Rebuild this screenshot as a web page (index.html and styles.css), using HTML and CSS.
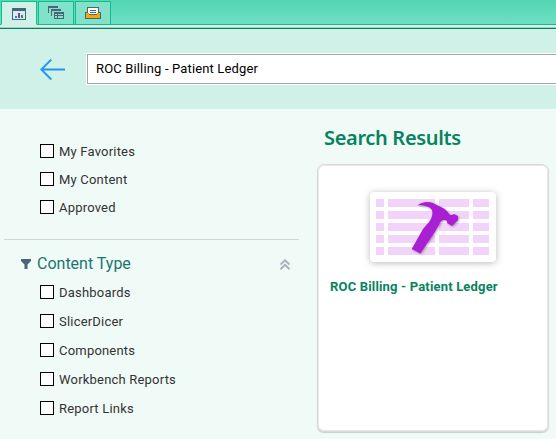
FILE: index.html
```html
<!DOCTYPE html>
<html lang="en">
<head>
<meta charset="utf-8">
<title>Search Results</title>
<link rel="stylesheet" href="styles.css">
</head>
<body>
<nav class="tabs">
  <div class="tab active">
    <svg width="14" height="12" viewBox="0 0 14 12" shape-rendering="crispEdges"><path fill="#4a6578" fill-rule="evenodd" d="M0 0h14v12H0zM1 3v8h12V3z"/><path fill="#2a7fc4" d="M3 8h2v2H3z"/><path fill="#8d35b5" d="M6 5h2v5H6z"/><path fill="#2f8f58" d="M9 7h2v3H9z"/></svg>
  </div>
  <div class="tab">
    <svg width="16" height="13" viewBox="0 0 16 13" shape-rendering="crispEdges"><path fill="#4a6578" d="M0 0h10v2H1v5H0zM3 3h10v2H4v5H3z"/><path fill="#4a6578" fill-rule="evenodd" d="M6 6h10v7H6zM7 8v1h2V8zM10 8v1h5V8zM7 10v2h2v-2zM10 10v2h5v-2z"/></svg>
  </div>
  <div class="tab">
    <svg width="16" height="12" viewBox="0 0 16 12" shape-rendering="crispEdges"><path fill="#4a6578" d="M2 0h12v5h2v7H0V5h2z"/><path fill="#fff" d="M3 1h10v6H3z"/><path fill="#f5a800" d="M1 6h3v2h8V6h3v5H1z"/><path fill="#4a6578" d="M5 3h6v1H5zM5 5h6v1H5z"/></svg>
  </div>
</nav>
<div class="rule"></div>
<header class="header">
  <svg class="back" width="26" height="22" viewBox="0 0 26 22" fill="none" stroke="#2196f3" stroke-width="1.8"><path d="M25 10.500H1.500M11.300 .5L1.300 10.500l10 10"/></svg>
  <div class="search">ROC Billing - Patient Ledger</div>
</header>
<main class="main">
  <aside class="side">
    <div class="quick">
      <label class="opt"><span class="box"></span>My Favorites</label>
      <label class="opt"><span class="box"></span>My Content</label>
      <label class="opt"><span class="box"></span>Approved</label>
    </div>
    <section class="group">
      <div class="ghead">
        <svg width="10" height="10" viewBox="0 0 10 10"><path fill="#4a6578" d="M0 0h10v2L6.500 5.500V10h-3V5.500L0 2z"/></svg>
        <h2>Content Type</h2>
        <svg width="10" height="11" viewBox="0 0 10 11" fill="none" stroke="#a6b5b9" stroke-width="1.900"><path d="M.5 5.500L5 1.200l4.500 4.300M.5 10.200L5 5.900l4.500 4.300"/></svg>
      </div>
      <div class="types">
        <label class="opt"><span class="box"></span>Dashboards</label>
        <label class="opt"><span class="box"></span>SlicerDicer</label>
        <label class="opt"><span class="box"></span>Components</label>
        <label class="opt"><span class="box"></span>Workbench Reports</label>
        <label class="opt"><span class="box"></span>Report Links</label>
      </div>
    </section>
  </aside>
  <section class="results">
    <h1>Search Results</h1>
    <article class="card">
      <svg class="thumb" width="126" height="70" viewBox="0 0 126 70">
        <path fill="#f2d3fa" d="M6 7h8v8H6zM18 7h47v8H18zM69 7h30v8H69zM103 7h16v8h-16zM6 19h8v8H6zM18 19h47v8H18zM69 19h30v8H69zM103 19h16v8h-16zM6 31h8v8H6zM18 31h47v8H18zM69 31h30v8H69zM103 31h16v8h-16zM6 43h8v8H6zM18 43h47v8H18zM69 43h30v8H69zM103 43h16v8h-16zM6 55h8v8H6zM18 55h47v8H18zM69 55h30v8H69zM103 55h16v8h-16z"/>
        <path class="hammer" fill="#a91fd3" d="M47.300 13.500C51 10 58 9 63 11L72 15.500Q77 18 79 22Q81 24 84 22L88 24V28L82 34L77 31Q78 28.500 75 28C72 27.500 70.500 29 69 33L63.500 42L50.300 61.500L41.700 57L53 37C58 31 61 29 62.500 22Q63 16 57 14.500C54 13.500 51 13 47.300 13.500z"/>
      </svg>
      <h3>ROC Billing - Patient Ledger</h3>
    </article>
  </section>
</main>
</body>
</html>
```
FILE: styles.css
```css
* { box-sizing: border-box; }
body {
  margin: 0;
  height: 439px;
  overflow: hidden;
  background: #f0faf7;
  font: 13px/16px Roboto, sans-serif;
  color: #333;
}
h1, h2, h3 { margin: 0; }
svg { display: block; flex: none; }
.tabs {
  display: flex;
  gap: 1px;
  height: 25px;
  padding: 1px 0 0 1px;
  background: linear-gradient(#52d6b3, #6fdec2);
  border-bottom: 1px solid #10bd8b;
}
.tab {
  display: flex;
  justify-content: center;
  width: 36px;
  height: 24px;
  padding-top: 4px;
  border: 1px solid #10bd8b;
  background: #81e1c9;
}
.tab:last-child { padding-top: 5px; }
.tab.active { padding-top: 6px; background: #cff1e7; border-bottom-color: #cff1e7; }
.rule {
  height: 4px;
  background: #cff1e7;
  border-bottom: 1px solid #087f61;
  box-shadow: inset 0 -1px #a8cec2;
}
.header {
  display: flex;
  height: 80px;
  padding: 24px 0 0 40px;
  background: #cff1e7;
}
.back { margin: 6px 20px 0 0; }
.search {
  flex: 1;
  height: 32px;
  border: 1px solid #fff;
  border-right: 0;
  box-shadow: inset 1px 1px #a6a6a6, inset 0 -1px #a6a6a6;
  background: #fff;
  padding: 7px 0 0 9px;
  color: #000;
  letter-spacing: .15px;
}
.main { display: flex; }
.side { width: 295px; margin-left: 4px; }
.quick { padding: 28px 0 18px 36px; border-bottom: 1px solid #c8dcd5; }
.opt {
  display: flex;
  align-items: center;
  gap: 5px;
  height: 28px;
  padding-top: 1px;
  letter-spacing: .2px;
}
.quick .opt { padding-top: 2px; }
.box { width: 14px; height: 14px; margin-bottom: 2px; border: 1px solid #000; background: #fff; }
.ghead { display: flex; align-items: center; height: 20px; margin: 14px 9px 0 17px; }
.ghead h2 {
  flex: 1;
  margin-left: 6px;
  font-size: 16px;
  line-height: 20px;
  font-weight: 400;
  color: #20756d;
}
.types { padding: 4px 0 0 36px; }
.types .opt { height: 29px; }
.results { margin-left: 18px; }
h1 {
  margin: 17px 0 0 7px;
  font: 600 20px/24px "Noto Sans", sans-serif;
  letter-spacing: -.33px;
  color: #078360;
}
.card {
  width: 232px;
  height: 268px;
  margin-top: 14px;
  padding: 27px 12px 0;
  border: 1px solid #d5dcda;
  border-radius: 7px;
  background: #fff;
  box-shadow: inset 0 0 0 1px #e6e9e8, 0 1px 1px #c8d0cd;
}
.thumb {
  margin-left: 40px;
  border-radius: 4px;
  background: #fff;
  box-shadow: 0 1px 7px rgba(0, 0, 0, .28);
}
.hammer { filter: drop-shadow(1px 1px 1px rgba(60, 20, 70, .4)); }
h3 {
  margin-top: 17px;
  font-size: 13px;
  line-height: 16px;
  font-weight: 700;
  letter-spacing: .17px;
  color: #078360;
  white-space: nowrap;
}
```
